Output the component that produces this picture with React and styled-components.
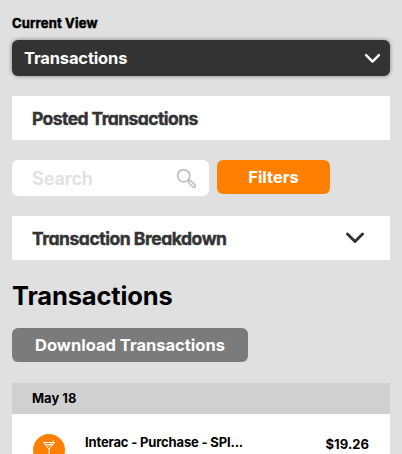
import React from 'react';
import styled, { createGlobalStyle } from 'styled-components';

const GlobalStyle = createGlobalStyle`
  *, *::before, *::after { box-sizing: border-box; }
  body {
    margin: 0;
    background: #e0e0e0;
    color: #000;
    font-family: Inter, sans-serif;
    overflow: hidden;
  }
  button, input { font-family: inherit; border: 0; margin: 0; }
`;

const Page = styled.main`
  height: 454px;
  overflow: hidden;
  padding: 14px 12px 0;
  display: flex;
  flex-direction: column;
`;

const ViewLabel = styled.label`
  font: 700 13px/18px Inter, sans-serif;
  letter-spacing: 0.17px;
  -webkit-text-stroke: 0.5px #000;
  white-space: nowrap;
`;

const ViewSelect = styled.button`
  margin-top: 8px;
  height: 36px;
  flex: none;
  display: flex;
  align-items: center;
  justify-content: space-between;
  padding: 0 9px 0 12px;
  border-radius: 6px;
  background: #333;
  color: #fff;
  box-shadow: 0 0 4px rgba(0, 0, 0, 0.45);
  font-size: 16.5px;
  font-weight: 700;
  line-height: 22px;
  letter-spacing: -0.15px;
`;

const Panel = styled.section`
  margin-top: 20px;
  height: 44px;
  flex: none;
  display: flex;
  align-items: center;
  justify-content: space-between;
  padding: 0 25px 0 20px;
  background: #fff;
  color: #333;
`;

const PanelTitle = styled.h2`
  margin: 0;
  padding-top: 2px;
  font: 700 17.5px/22px Inter, sans-serif;
  font-feature-settings: 'cv11';
  letter-spacing: ${({ $tracking }) => $tracking};
  -webkit-text-stroke: 0.4px #333;
  white-space: nowrap;
`;

const Toolbar = styled.div`
  margin-top: 20px;
  height: 36px;
  flex: none;
  display: flex;
  gap: 8px;
`;

const SearchBox = styled.div`
  width: 197px;
  height: 36px;
  display: flex;
  align-items: center;
  padding: 1px 12px 0 20px;
  border-radius: 6px;
  background: #fff;
`;

const SearchInput = styled.input`
  flex: 1;
  min-width: 0;
  padding: 0;
  outline: 0;
  background: none;
  font: 600 18px/24px Inter, sans-serif;
  letter-spacing: -0.05px;
  &::placeholder { color: #e0e0e0; opacity: 1; }
`;

const Action = styled.button`
  width: ${({ $width }) => $width};
  height: 34px;
  padding: 0;
  border-radius: 6px;
  background: ${({ $tone }) => $tone};
  color: #fff;
  font-size: 16.5px;
  font-weight: 700;
  line-height: 22px;
  letter-spacing: 0;
`;

const Heading = styled.h1`
  margin: 20px 0 0;
  height: 32px;
  flex: none;
  font-size: 25.5px;
  font-weight: 700;
  line-height: 32px;
  letter-spacing: -0.16px;
`;

const DownloadRow = styled.div`
  margin-top: 16px;
  height: 34px;
  flex: none;
`;

const DayHeader = styled.h3`
  margin: 21px 0 0;
  height: 31px;
  flex: none;
  padding: 0 20px;
  background: #d0d0d0;
  font-size: 13px;
  font-weight: 700;
  line-height: 31px;
  letter-spacing: 0;
`;

const Entry = styled.article`
  height: 72px;
  flex: none;
  display: flex;
  align-items: flex-start;
  padding: 20px 21px 0 21px;
  background: #fff;
`;

const EntryBadge = styled.span`
  width: 32px;
  height: 32px;
  display: flex;
  border-radius: 50%;
  background: #ff8000;
`;

const Merchant = styled.span`
  flex: 1;
  margin: -1px 0 0 20px;
  font-size: 13px;
  font-weight: 700;
  line-height: 18px;
  letter-spacing: -0.16px;
`;

const Amount = styled.span`
  margin-top: 1px;
  font-size: 13px;
  font-weight: 700;
  line-height: 18px;
  letter-spacing: 0.05px;
`;

const Chevron = ({ size, color }) => (
  <svg width={size} height={size} viewBox="0 0 18 18" fill="none" stroke={color} strokeWidth="2.6" strokeLinecap="round" strokeLinejoin="round">
    <path d="M2.2 5.4 9 12.2 15.8 5.4" />
  </svg>
);

const SearchIcon = () => (
  <svg width="21" height="21" viewBox="0 0 21 21" fill="none" stroke="#bdbdbd">
    <circle cx="7.7" cy="7.7" r="6.1" strokeWidth="1.7" />
    <path d="m12.2 12.2 1.2 1.2" strokeWidth="1.7" />
    <path d="m12.6 14.6 4.2 4.3a1.45 1.45 0 0 0 2.1-2.1l-4.3-4.2a1.42 1.42 0 0 0-2 2Z" strokeWidth="1.5" />
  </svg>
);

const CocktailIcon = () => (
  <svg width="32" height="32" viewBox="0 0 32 32" fill="none" stroke="#fff" strokeWidth="1" strokeLinejoin="round" strokeLinecap="round">
    <path d="M10.8 8.5h10.8l-5.4 6.3ZM16.2 14.8v8M13 23h6.4M13 10.7h6.6M15.8 12.2l4.8-5.4" />
  </svg>
);

export default function App() {
  return (
    <>
      <GlobalStyle />
      <Page>
        <ViewLabel>Current View</ViewLabel>
        <ViewSelect>
          Transactions
          <Chevron size={17} color="#fff" />
        </ViewSelect>
        <Panel>
          <PanelTitle $tracking="-0.57px">Posted Transactions</PanelTitle>
        </Panel>
        <Toolbar>
          <SearchBox>
            <SearchInput placeholder="Search" aria-label="Search" />
            <SearchIcon />
          </SearchBox>
          <Action $width="113px" $tone="#ff8000">Filters</Action>
        </Toolbar>
        <Panel>
          <PanelTitle $tracking="-0.46px">Transaction Breakdown</PanelTitle>
          <Chevron size={20} color="#333" />
        </Panel>
        <Heading>Transactions</Heading>
        <DownloadRow>
          <Action $width="236px" $tone="#7b7b7b">Download Transactions</Action>
        </DownloadRow>
        <DayHeader>May 18</DayHeader>
        <Entry>
          <EntryBadge><CocktailIcon /></EntryBadge>
          <Merchant>Interac - Purchase - SPI...</Merchant>
          <Amount>$19.26</Amount>
        </Entry>
      </Page>
    </>
  );
}
